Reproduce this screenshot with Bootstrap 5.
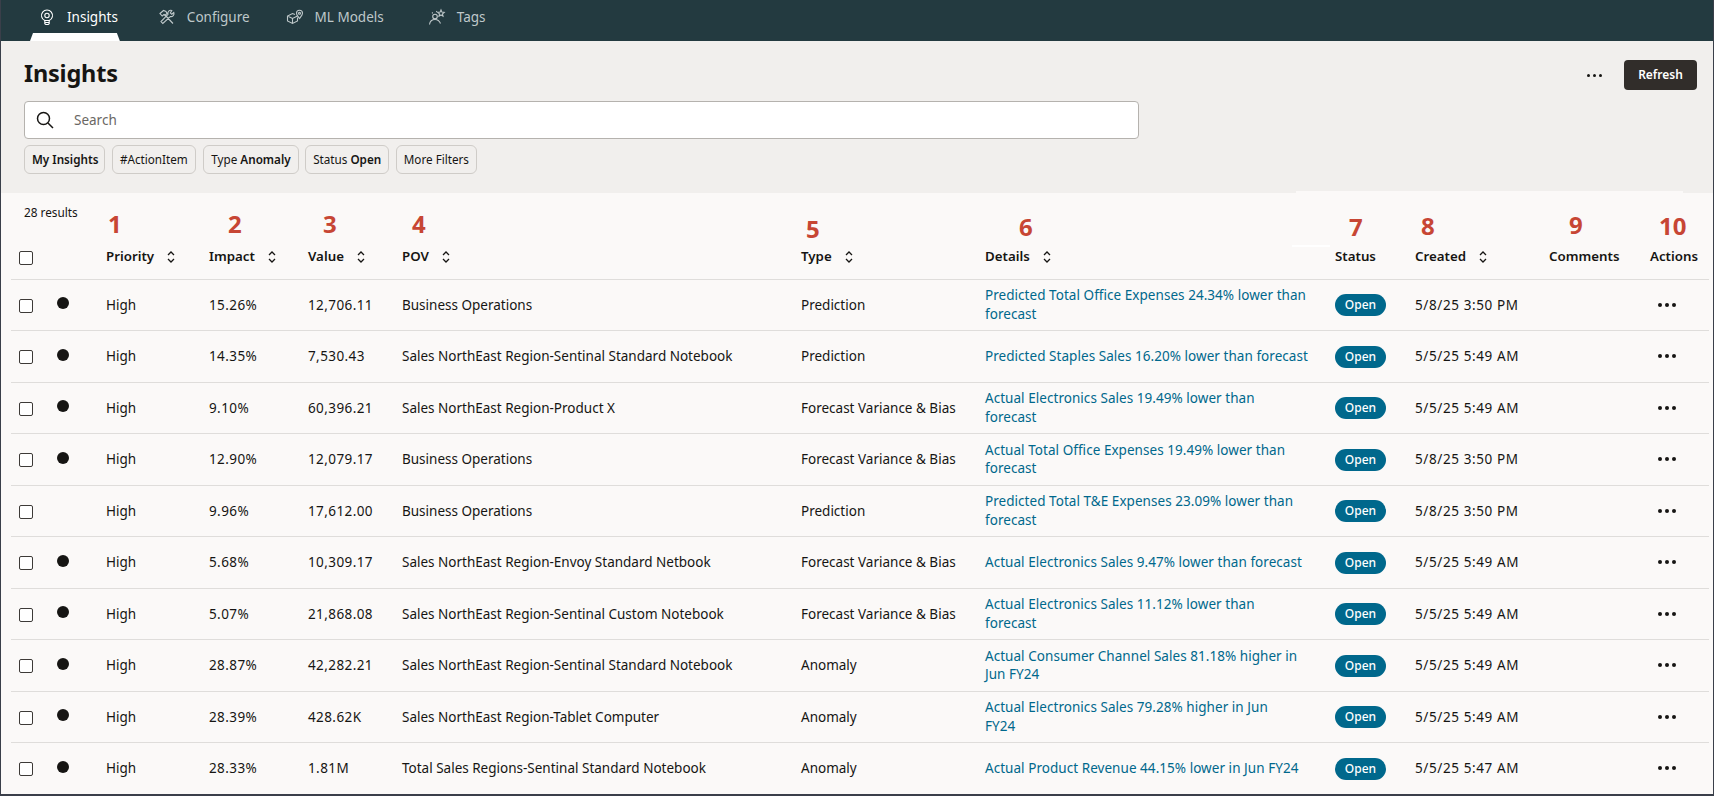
<!DOCTYPE html>
<html lang="en">
<head>
<meta charset="utf-8">
<title>Insights</title>
<link href="https://cdn.jsdelivr.net/npm/bootstrap@5.3.0/dist/css/bootstrap.min.css" rel="stylesheet">
<style>
html,body{height:100%;overflow:hidden}
body{font-family:"Noto Sans","Liberation Sans",sans-serif;font-size:13.5px;color:#161513;background:#fbf9f8}
.app-frame{height:796px;border:solid #3a3f4a;border-width:0 1px 2px 1px;display:flex;flex-direction:column;overflow:hidden}
.top-tabs{background:#233a40;height:41px;padding-left:29px;flex:none;align-items:stretch}
.top-tab{color:#bfc8ca;text-decoration:none;display:flex;align-items:center;gap:11px;padding:0 2px 0 8px;margin-right:30px;font-size:13.5px;position:relative;height:34px}
.top-tab:nth-child(2){margin-right:26px}
.top-tab:nth-child(3){margin-right:34px}
.top-tab.is-on{color:#fff}
.top-tab svg{width:18px;height:18px;fill:none;stroke:currentColor;stroke-width:1.1}
.tab-mark{position:absolute;left:0;right:0;bottom:-7px;height:8px;background:#fff;clip-path:polygon(3px 0,calc(100% - 3px) 0,100% 100%,0 100%)}
.page-head{background:#f1efed;height:152px;flex:none;padding:15px 16px 0 23px}
.page-title{font-size:23.500px;font-weight:700;line-height:34px;margin:0 0 11px;letter-spacing:-.2px}
.search-box{width:1115px;height:38px;background:#fff;border:1px solid #b5b2ae;border-radius:4px;padding-left:11px;gap:20px;color:#6a6764}
.search-box svg{width:18px;height:18px;flex:none}
.filter-chip{font-size:11.700px;line-height:27px;height:29px;padding:0 7px;border:1px solid #cfccc8;border-radius:6px;background:#f1efed;color:#161513}
.filter-chip:first-child{padding-right:6px}
.chip-row{margin-top:6px;gap:6.500px}
.filter-chip:nth-child(2){margin-right:1px}
.more-dots{gap:3px;margin-right:22px}
.more-dots i{width:3px;height:3px;border-radius:50%;background:#161513;display:block}
.refresh-btn{background:#312d2a;color:#fff;font-size:12px;font-weight:600;height:30px;width:73px;padding:0;border-radius:4px;border:0}
.head-actions{margin-top:4px}
.results-area{position:relative;padding-left:10px;flex:1 1 auto}
.result-count{position:absolute;left:23px;top:11px;font-size:11.800px}
.erase-top{position:absolute;left:1295px;top:-2px;width:387px;height:2px;background:#fbf9f8}
.erase-dash{position:absolute;left:1291px;top:52px;width:38px;height:2px;background:#fff}
.grid-table{table-layout:fixed;width:1698px;margin:0;--bs-table-bg:transparent;color:#161513;font-size:13.500px}
.grid-table col:nth-child(1){width:34px}
.grid-table col:nth-child(2){width:53px}
.grid-table col:nth-child(3){width:103px}
.grid-table col:nth-child(4){width:99px}
.grid-table col:nth-child(5){width:94px}
.grid-table col:nth-child(6){width:399px}
.grid-table col:nth-child(7){width:184px}
.grid-table col:nth-child(8){width:350px}
.grid-table col:nth-child(9){width:80px}
.grid-table col:nth-child(10){width:134px}
.grid-table col:nth-child(11){width:101px}
.grid-table col:nth-child(12){width:67px}
.grid-table th,.grid-table td{padding:0 8px;vertical-align:middle;border-bottom:1px solid #dfdddb}
.grid-table thead th{height:86px;vertical-align:bottom;padding-bottom:14px;font-size:13.300px;font-weight:600;line-height:18px;white-space:nowrap}
.grid-table tbody td{height:51.500px;line-height:18.500px}
.anno{color:#c74634;font-size:24px;font-weight:700;line-height:26px;height:30px}
.anno-1{margin-left:2px;margin-bottom:6px}.anno-2{margin-left:19px;margin-bottom:6px}.anno-3{margin-left:15px;margin-bottom:6px}.anno-4{margin-left:10px;margin-bottom:6px}.anno-5{margin-left:5px;margin-bottom:1px}.anno-6{margin-left:34px;margin-bottom:3px}.anno-7{margin-left:14px;margin-bottom:3px}.anno-8{margin-left:6px;margin-bottom:4px}.anno-9{margin-left:20px;margin-bottom:5px}.anno-10{margin-left:9px;margin-bottom:4px}
.sort-mark{width:10px;height:14px;margin-left:12px;vertical-align:-3px;fill:none;stroke:#161513;stroke-width:1.300}
.tick-box{width:14px;height:14px;border:1.500px solid #3d3a37;border-radius:2px;background:#fff;display:block;margin-top:2px}
.flag-dot{width:12px;height:12px;border-radius:50%;background:#161513;display:block;margin:-3px 0 0 4px}
.num-cell{letter-spacing:.4px}
.date-cell{letter-spacing:.6px}
.detail-link{color:#00688c;text-decoration:none;display:block;max-width:335px;letter-spacing:.045px}
.open-pill{background:#00688c;color:#fff;font-size:12px;font-weight:500;border-radius:11px;width:51px;height:22px;line-height:22px;text-align:center;display:block;margin-top:1px}
.row-dots{gap:3px;margin-left:8px}
.row-dots i{width:4px;height:4px;border-radius:50%;background:#161513;display:block}
</style>
</head>
<body>
<div class="app-frame">
  <nav class="nav top-tabs">
    <a class="top-tab is-on" href="#">
      <svg viewBox="0 0 18 18"><path d="M6.800 12.500a5.500 5.500 0 1 1 4.400 0z"/><circle cx="9" cy="7.500" r="2.200"/><path d="M6.800 12.500v3.200l1 .8h2.400l1-.8v-3.200M6.800 14.500h4.400"/></svg>Insights<span class="tab-mark"></span></a>
    <a class="top-tab" href="#">
      <svg viewBox="0 0 18 18"><path d="M2 5.500l3.500-3 2.500 1 1 2-2 2-1-1-1.800 1.500zM6.500 6.500l8.500 9M13.800 2.500a3 3 0 0 0-3.800 3.800L3 13.500 4.800 15.500l7.500-7a3 3 0 0 0 3.500-4l-2 1.700-1.500-1.300z"/></svg>Configure</a>
    <a class="top-tab" href="#">
      <svg viewBox="0 0 18 18"><path d="M9 6.500L6.500 5.500 1.500 8v5l5 2.500 5-2.500V9.500M1.500 8l5 2.500 5-2.500M6.500 10.500v5"/><path d="M13.500 10.500c-1.500-2-3-3.500-3-5.200a3 3 0 0 1 6 0c0 1.700-1.500 3.200-3 5.200z"/><circle cx="13.500" cy="5.300" r="1"/></svg>ML Models</a>
    <a class="top-tab" href="#">
      <svg viewBox="0 0 18 18"><circle cx="7" cy="8.500" r="2.300"/><path d="M1.500 16.500c.5-3.500 2.500-5 5.500-5s4.500 1.500 5.500 4M13 2l.9 2.100 2.300.3-1.700 1.500.5 2.300-2-1.200-2 1.200.5-2.300-1.700-1.500 2.300-.3zM8.500 3l.3 1M4 4.500l.8.800"/></svg>Tags</a>
  </nav>
  <header class="page-head d-flex justify-content-between">
    <div>
      <h1 class="page-title">Insights</h1>
      <div class="search-box d-flex align-items-center">
        <svg viewBox="0 0 18 18" fill="none" stroke="#161513" stroke-width="1.500"><circle cx="7.500" cy="7.500" r="6"/><path d="M12 12l5 5"/></svg>
        <span>Search</span>
      </div>
      <div class="d-flex chip-row">
        <span class="filter-chip fw-semibold">My Insights</span>
        <span class="filter-chip">#ActionItem</span>
        <span class="filter-chip">Type <b class="fw-semibold">Anomaly</b></span>
        <span class="filter-chip">Status <b class="fw-semibold">Open</b></span>
        <span class="filter-chip">More Filters</span>
      </div>
    </div>
    <div class="d-flex align-items-center align-self-start head-actions">
      <div class="d-flex more-dots"><i></i><i></i><i></i></div>
      <button class="btn refresh-btn" type="button">Refresh</button>
    </div>
  </header>
  <main class="results-area">
    <div class="result-count">28 results</div>
    <span class="erase-top"></span>
    <span class="erase-dash"></span>
    <table class="table grid-table">
      <colgroup><col><col><col><col><col><col><col><col><col><col><col><col></colgroup>
      <thead>
        <tr>
          <th><span class="tick-box"></span></th>
          <th></th>
          <th><div class="anno anno-1">1</div>Priority<svg class="sort-mark" viewBox="0 0 10 14"><path d="M2 5l3-3 3 3M2 9l3 3 3-3"/></svg></th>
          <th><div class="anno anno-2">2</div>Impact<svg class="sort-mark" viewBox="0 0 10 14"><path d="M2 5l3-3 3 3M2 9l3 3 3-3"/></svg></th>
          <th><div class="anno anno-3">3</div>Value<svg class="sort-mark" viewBox="0 0 10 14"><path d="M2 5l3-3 3 3M2 9l3 3 3-3"/></svg></th>
          <th><div class="anno anno-4">4</div>POV<svg class="sort-mark" viewBox="0 0 10 14"><path d="M2 5l3-3 3 3M2 9l3 3 3-3"/></svg></th>
          <th><div class="anno anno-5">5</div>Type<svg class="sort-mark" viewBox="0 0 10 14"><path d="M2 5l3-3 3 3M2 9l3 3 3-3"/></svg></th>
          <th><div class="anno anno-6">6</div>Details<svg class="sort-mark" viewBox="0 0 10 14"><path d="M2 5l3-3 3 3M2 9l3 3 3-3"/></svg></th>
          <th><div class="anno anno-7">7</div>Status</th>
          <th><div class="anno anno-8">8</div>Created<svg class="sort-mark" viewBox="0 0 10 14"><path d="M2 5l3-3 3 3M2 9l3 3 3-3"/></svg></th>
          <th><div class="anno anno-9">9</div>Comments</th>
          <th><div class="anno anno-10">10</div>Actions</th>
        </tr>
      </thead>
      <tbody>
        <tr><td><span class="tick-box"></span></td><td><span class="flag-dot"></span></td><td>High</td><td class="num-cell">15.26%</td><td class="num-cell">12,706.11</td><td>Business Operations</td><td>Prediction</td><td><a class="detail-link" href="#">Predicted Total Office Expenses 24.34% lower than forecast</a></td><td><span class="open-pill">Open</span></td><td class="date-cell">5/8/25 3:50 PM</td><td></td><td><div class="d-flex row-dots"><i></i><i></i><i></i></div></td></tr>
        <tr><td><span class="tick-box"></span></td><td><span class="flag-dot"></span></td><td>High</td><td class="num-cell">14.35%</td><td class="num-cell">7,530.43</td><td>Sales NorthEast Region-Sentinal Standard Notebook</td><td>Prediction</td><td><a class="detail-link" href="#">Predicted Staples Sales 16.20% lower than forecast</a></td><td><span class="open-pill">Open</span></td><td class="date-cell">5/5/25 5:49 AM</td><td></td><td><div class="d-flex row-dots"><i></i><i></i><i></i></div></td></tr>
        <tr><td><span class="tick-box"></span></td><td><span class="flag-dot"></span></td><td>High</td><td class="num-cell">9.10%</td><td class="num-cell">60,396.21</td><td>Sales NorthEast Region-Product X</td><td>Forecast Variance &amp; Bias</td><td><a class="detail-link" href="#">Actual Electronics Sales 19.49% lower than<br>forecast</a></td><td><span class="open-pill">Open</span></td><td class="date-cell">5/5/25 5:49 AM</td><td></td><td><div class="d-flex row-dots"><i></i><i></i><i></i></div></td></tr>
        <tr><td><span class="tick-box"></span></td><td><span class="flag-dot"></span></td><td>High</td><td class="num-cell">12.90%</td><td class="num-cell">12,079.17</td><td>Business Operations</td><td>Forecast Variance &amp; Bias</td><td><a class="detail-link" href="#">Actual Total Office Expenses 19.49% lower than<br>forecast</a></td><td><span class="open-pill">Open</span></td><td class="date-cell">5/8/25 3:50 PM</td><td></td><td><div class="d-flex row-dots"><i></i><i></i><i></i></div></td></tr>
        <tr><td><span class="tick-box"></span></td><td></td><td>High</td><td class="num-cell">9.96%</td><td class="num-cell">17,612.00</td><td>Business Operations</td><td>Prediction</td><td><a class="detail-link" href="#">Predicted Total T&amp;E Expenses 23.09% lower than<br>forecast</a></td><td><span class="open-pill">Open</span></td><td class="date-cell">5/8/25 3:50 PM</td><td></td><td><div class="d-flex row-dots"><i></i><i></i><i></i></div></td></tr>
        <tr><td><span class="tick-box"></span></td><td><span class="flag-dot"></span></td><td>High</td><td class="num-cell">5.68%</td><td class="num-cell">10,309.17</td><td>Sales NorthEast Region-Envoy Standard Netbook</td><td>Forecast Variance &amp; Bias</td><td><a class="detail-link" href="#">Actual Electronics Sales 9.47% lower than forecast</a></td><td><span class="open-pill">Open</span></td><td class="date-cell">5/5/25 5:49 AM</td><td></td><td><div class="d-flex row-dots"><i></i><i></i><i></i></div></td></tr>
        <tr><td><span class="tick-box"></span></td><td><span class="flag-dot"></span></td><td>High</td><td class="num-cell">5.07%</td><td class="num-cell">21,868.08</td><td>Sales NorthEast Region-Sentinal Custom Notebook</td><td>Forecast Variance &amp; Bias</td><td><a class="detail-link" href="#">Actual Electronics Sales 11.12% lower than<br>forecast</a></td><td><span class="open-pill">Open</span></td><td class="date-cell">5/5/25 5:49 AM</td><td></td><td><div class="d-flex row-dots"><i></i><i></i><i></i></div></td></tr>
        <tr><td><span class="tick-box"></span></td><td><span class="flag-dot"></span></td><td>High</td><td class="num-cell">28.87%</td><td class="num-cell">42,282.21</td><td>Sales NorthEast Region-Sentinal Standard Notebook</td><td>Anomaly</td><td><a class="detail-link" href="#">Actual Consumer Channel Sales 81.18% higher in<br>Jun FY24</a></td><td><span class="open-pill">Open</span></td><td class="date-cell">5/5/25 5:49 AM</td><td></td><td><div class="d-flex row-dots"><i></i><i></i><i></i></div></td></tr>
        <tr><td><span class="tick-box"></span></td><td><span class="flag-dot"></span></td><td>High</td><td class="num-cell">28.39%</td><td class="num-cell">428.62K</td><td>Sales NorthEast Region-Tablet Computer</td><td>Anomaly</td><td><a class="detail-link" href="#">Actual Electronics Sales 79.28% higher in Jun<br>FY24</a></td><td><span class="open-pill">Open</span></td><td class="date-cell">5/5/25 5:49 AM</td><td></td><td><div class="d-flex row-dots"><i></i><i></i><i></i></div></td></tr>
        <tr><td><span class="tick-box"></span></td><td><span class="flag-dot"></span></td><td>High</td><td class="num-cell">28.33%</td><td class="num-cell">1.81M</td><td>Total Sales Regions-Sentinal Standard Notebook</td><td>Anomaly</td><td><a class="detail-link" href="#">Actual Product Revenue 44.15% lower in Jun FY24</a></td><td><span class="open-pill">Open</span></td><td class="date-cell">5/5/25 5:47 AM</td><td></td><td><div class="d-flex row-dots"><i></i><i></i><i></i></div></td></tr>
      </tbody>
    </table>
  </main>
</div>
</body>
</html>
